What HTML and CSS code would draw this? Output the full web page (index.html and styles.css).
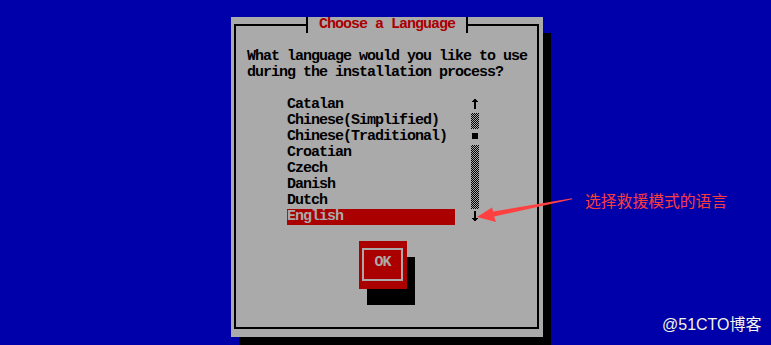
FILE: index.html
```html
<!DOCTYPE html>
<html lang="en">
<head>
<meta charset="utf-8">
<title>Choose a Language</title>
<link rel="stylesheet" href="styles.css">
</head>
<body>
<div class="screen">
  <div class="dialog">
    <div class="title">Choose a Language</div>
    <div class="frame">
      <p class="prompt">What language would you like to use<br>during the installation process?</p>
      <div class="listbox">
        <ul class="list">
          <li>Catalan</li>
          <li>Chinese(Simplified)</li>
          <li>Chinese(Traditional)</li>
          <li>Croatian</li>
          <li>Czech</li>
          <li>Danish</li>
          <li>Dutch</li>
          <li class="sel">English</li>
        </ul>
        <div class="scrollbar">
          <svg class="cell" viewBox="0 0 8 16" width="8" height="16" shape-rendering="crispEdges"><rect x="3" y="2" width="2" height="1"/><rect x="2" y="3" width="4" height="1"/><rect x="1" y="4" width="6" height="1"/><rect x="3" y="5" width="2" height="7"/></svg>
          <div class="trough"></div>
          <svg class="cell" viewBox="0 0 8 16" width="8" height="16" shape-rendering="crispEdges"><rect x="1" y="4" width="6" height="6"/></svg>
          <div class="trough tall"></div>
          <svg class="cell" viewBox="0 0 8 16" width="8" height="16" shape-rendering="crispEdges"><rect x="3" y="2" width="2" height="7"/><rect x="1" y="9" width="6" height="1"/><rect x="2" y="10" width="4" height="1"/><rect x="3" y="11" width="2" height="1"/></svg>
        </div>
      </div>
      <div class="buttons">
        <button class="ok" type="button"><span class="ok-inner">OK</span></button>
      </div>
    </div>
  </div>
  <svg class="annot-arrow" viewBox="0 0 771 345" width="771" height="345">
    <polygon points="477,217 492,207.5 493.2,211.6 572,198.2 572.3,199.3 494.2,216.4 496,222" fill="#ff4040"/>
  </svg>
  <div class="annot-text">选择救援模式的语言</div>
  <div class="watermark">@51CTO博客</div>
</div>
</body>
</html>
```

FILE: styles.css
```css
html, body {
  margin: 0;
  padding: 0;
}

body {
  background: #0000aa;
}

.screen {
  position: relative;
  width: 771px;
  height: 345px;
  overflow: hidden;
  background: #0000aa;
  box-sizing: border-box;
  padding: 17px 0 0 231px;
}

.dialog {
  position: relative;
  width: 312px;
  height: 320px;
  box-sizing: border-box;
  padding: 7px 4px 8px 3px;
  background: #aaaaaa;
  box-shadow: 8px 16px 0 0 #000;
  color: #000;
  font-family: "Liberation Mono", "DejaVu Sans Mono", monospace;
  font-weight: bold;
  font-size: 15px;
  letter-spacing: -1px;
  line-height: 16px;
}

.title {
  position: absolute;
  left: 75px;
  top: 0;
  height: 16px;
  padding: 0 11px;
  border-left: 2px solid #000;
  border-right: 2px solid #000;
  background: #aaaaaa;
  color: #aa0000;
  white-space: pre;
}

.frame {
  height: 100%;
  box-sizing: border-box;
  border: 2px solid #000;
  padding: 23px 0 0 11px;
}

.prompt {
  margin: 0 0 16px 0;
  white-space: nowrap;
}

.listbox {
  display: flex;
  gap: 16px;
  margin-left: 40px;
}

.list {
  list-style: none;
  margin: 0;
  padding: 0;
  width: 168px;
}

.list li {
  height: 16px;
  white-space: pre;
}

.list li.sel {
  background: #aa0000;
  color: #aaaaaa;
}

.scrollbar {
  display: flex;
  flex-direction: column;
  width: 8px;
}

.cell {
  display: block;
  fill: #000;
}

.trough {
  height: 16px;
  background: repeating-conic-gradient(#000 0 25%, #aaaaaa 0 50%) 0 0 / 2px 2px;
}

.trough.tall {
  height: 64px;
}

.buttons {
  margin: 16px 0 0 112px;
}

.ok {
  display: block;
  width: 48px;
  height: 48px;
  box-sizing: border-box;
  margin: 0;
  padding: 7px 4px 8px 3px;
  border: none;
  border-radius: 0;
  background: #aa0000;
  box-shadow: 8px 16px 0 0 #000;
  font: inherit;
  letter-spacing: -1px;
  line-height: 16px;
  color: #aaaaaa;
}

.ok-inner {
  display: block;
  height: 100%;
  box-sizing: border-box;
  border: 2px solid #aaaaaa;
  padding-top: 5px;
  text-align: center;
}

.annot-arrow {
  position: absolute;
  left: 0;
  top: 0;
  pointer-events: none;
}

.annot-text {
  position: absolute;
  left: 585px;
  top: 193px;
  font-family: "Noto Sans CJK SC", sans-serif;
  font-size: 15.8px;
  line-height: 16px;
  color: #ff3c3c;
  white-space: nowrap;
}

.watermark {
  position: absolute;
  left: 662px;
  top: 315px;
  font-family: "Liberation Sans", "Noto Sans CJK SC", sans-serif;
  font-size: 16px;
  line-height: 20px;
  color: #f4f4f4;
  white-space: nowrap;
  text-shadow: 0 0 1px rgba(0, 0, 0, 0.4);
}
```
